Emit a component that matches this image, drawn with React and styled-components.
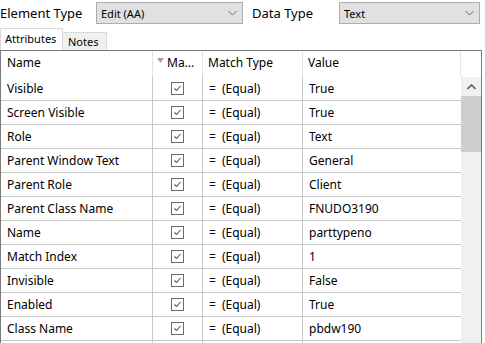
import React from "react";
import styled, { createGlobalStyle } from "styled-components";

const GlobalStyle = createGlobalStyle`
  html, body {
    margin: 0;
    padding: 0;
    background: #ffffff;
  }
  body {
    font-family: "Noto Sans", "Open Sans", sans-serif;
    overflow: hidden;
  }
`;

const Window = styled.div`
  width: 485px;
  height: 343px;
  overflow: hidden;
  background: #ffffff;
  color: #000000;
  font-size: 12px;
`;

const TopBar = styled.div`
  display: flex;
  align-items: center;
  height: 25px;
  padding-top: 1px;
  box-sizing: border-box;
`;

const FieldLabel = styled.div`
  width: ${(p) => p.$width}px;
  margin-left: ${(p) => p.$offset || 0}px;
  font-size: 13px;
  line-height: 22px;
  white-space: nowrap;
`;

const Select = styled.div`
  width: ${(p) => p.$width}px;
  height: 22px;
  box-sizing: border-box;
  border: 1px solid #adadad;
  background: #e1e1e1;
  display: flex;
  align-items: center;
  justify-content: space-between;
  padding: 0 5px 0 4px;
  font-size: 11px;
`;

const TabStrip = styled.div`
  display: flex;
  align-items: flex-end;
  height: 25px;
`;

const Tab = styled.div`
  box-sizing: border-box;
  height: ${(p) => (p.$active ? 22 : 18)}px;
  width: ${(p) => p.$width}px;
  border: 1px solid #d9d9d9;
  border-bottom: none;
  background: ${(p) => (p.$active ? "#ffffff" : "#f0f0f0")};
  font-size: 11px;
  line-height: ${(p) => (p.$active ? 19 : 17)}px;
  padding-left: ${(p) => (p.$active ? 4 : 5)}px;
  margin-left: ${(p) => (p.$active ? 0 : -1)}px;
`;

const Panel = styled.div`
  width: 482px;
  height: 300px;
  box-sizing: border-box;
  border: 1px solid #7a7a7a;
  display: flex;
  flex-direction: column;
  overflow: hidden;
`;

const HeaderRow = styled.div`
  display: grid;
  grid-template-columns: 152px 50px 100px 158px 20px;
  height: 26px;
  flex: none;
`;

const HeaderCell = styled.div`
  border-right: ${(p) => (p.$last ? "none" : "1px solid #e5e5e5")};
  padding-left: ${(p) => p.$pad ?? 6}px;
  height: 26px;
  line-height: 24px;
  display: flex;
  align-items: flex-start;
  white-space: nowrap;
`;

const SortMark = styled.svg`
  margin-top: 7px;
  margin-right: 3px;
  flex: none;
`;

const Body = styled.div`
  display: flex;
  flex: 1;
  min-height: 0;
`;

const RowList = styled.div`
  width: 460px;
  flex: none;
`;

const Row = styled.div`
  display: grid;
  grid-template-columns: 152px 50px 100px 158px;
  height: 24px;
  box-sizing: border-box;
  border-bottom: 1px solid #c8c8c8;
`;

const Cell = styled.div`
  border-right: ${(p) => (p.$last ? "none" : "1px solid #c8c8c8")};
  padding-left: 6px;
  line-height: 22px;
  white-space: nowrap;
  overflow: hidden;
  display: flex;
  align-items: center;
  justify-content: ${(p) => (p.$center ? "center" : "flex-start")};
  ${(p) => p.$center && "padding-left: 0;"}
`;

const Eq = styled.span`
  margin-right: 6px;
`;

const CheckBox = styled.div`
  width: 13px;
  height: 13px;
  box-sizing: border-box;
  border: 1px solid #6a6a6a;
  background: #ffffff;
  display: flex;
  align-items: center;
  justify-content: center;
`;

const ScrollBar = styled.div`
  width: 20px;
  flex: none;
  background: #f0f0f0;
  display: flex;
  flex-direction: column;
`;

const ScrollButton = styled.div`
  height: 19px;
  display: flex;
  align-items: center;
  justify-content: center;
`;

const Thumb = styled.div`
  height: 56px;
  background: #cdcdcd;
`;

const Chevron = ({ up }) => (
  <svg width="9" height="6" viewBox="0 0 9 6">
    <polyline
      points={up ? "0.5,5 4.5,1 8.5,5" : "0.5,1 4.5,5 8.5,1"}
      fill="none"
      stroke={up ? "#606060" : "#707070"}
      strokeWidth={up ? 1.6 : 1}
    />
  </svg>
);

const Check = () => (
  <svg width="9" height="9" viewBox="0 0 9 9">
    <polyline
      points="1.5,4.5 3.5,6.5 7.5,2"
      fill="none"
      stroke="#5a5a5a"
      strokeWidth="1.1"
    />
  </svg>
);

const rows = [
  ["Visible", "True"],
  ["Screen Visible", "True"],
  ["Role", "Text"],
  ["Parent Window Text", "General"],
  ["Parent Role", "Client"],
  ["Parent Class Name", "FNUDO3190"],
  ["Name", "parttypeno"],
  ["Match Index", "1"],
  ["Invisible", "False"],
  ["Enabled", "True"],
  ["Class Name", "pbdw190"],
];

export default function App() {
  return (
    <Window>
      <GlobalStyle />
      <TopBar>
        <FieldLabel $width={96}>Element Type</FieldLabel>
        <Select $width={147}>
          <span>Edit (AA)</span>
          <Chevron />
        </Select>
        <FieldLabel $width={87} $offset={9}>
          Data Type
        </FieldLabel>
        <Select $width={141}>
          <span>Text</span>
          <Chevron />
        </Select>
      </TopBar>
      <TabStrip>
        <Tab $active $width={63}>
          Attributes
        </Tab>
        <Tab $width={45}>Notes</Tab>
      </TabStrip>
      <Panel>
        <HeaderRow>
          <HeaderCell>Name</HeaderCell>
          <HeaderCell $pad={4}>
            <SortMark width="7" height="5" viewBox="0 0 7 5">
              <polygon points="0,0 7,0 3.5,5" fill="#a0a0a0" />
            </SortMark>
            Ma...
          </HeaderCell>
          <HeaderCell $pad={5}>Match Type</HeaderCell>
          <HeaderCell $pad={5}>Value</HeaderCell>
          <HeaderCell $last />
        </HeaderRow>
        <Body>
          <RowList>
            {rows.map(([name, value]) => (
              <Row key={name}>
                <Cell>{name}</Cell>
                <Cell $center>
                  <CheckBox>
                    <Check />
                  </CheckBox>
                </Cell>
                <Cell>
                  <Eq>=</Eq>(Equal)
                </Cell>
                <Cell $last>{value}</Cell>
              </Row>
            ))}
            <Row>
              <Cell />
              <Cell />
              <Cell />
              <Cell $last />
            </Row>
          </RowList>
          <ScrollBar>
            <ScrollButton>
              <Chevron up />
            </ScrollButton>
            <Thumb />
          </ScrollBar>
        </Body>
      </Panel>
    </Window>
  );
}
